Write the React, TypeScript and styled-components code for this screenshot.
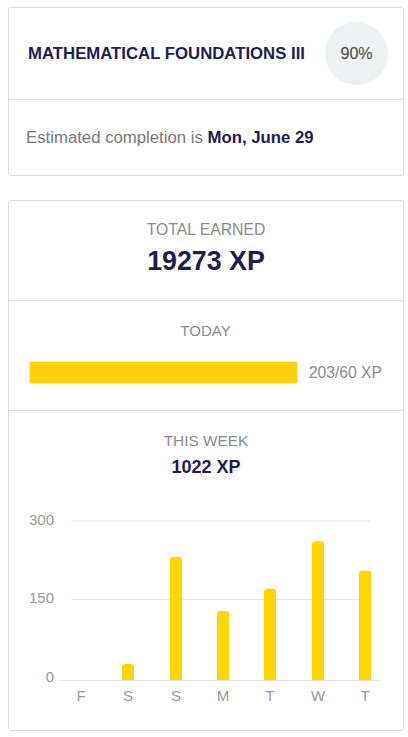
import React from "react";
import styled, { createGlobalStyle } from "styled-components";

const GlobalStyle = createGlobalStyle`
  html, body {
    margin: 0;
    padding: 0;
    background: #ffffff;
  }
  body {
    font-family: "Liberation Sans", Arial, sans-serif;
    padding: 7px 4px 0 8px;
  }
`;

const NAVY = "#221c4f";
const GREY = "#8a8a8a";
const LINE = "#e0e0e0";
const YELLOW = "#ffd600";

const week = [
  { day: "F", xp: 0 },
  { day: "S", xp: 30 },
  { day: "S", xp: 232 },
  { day: "M", xp: 130 },
  { day: "T", xp: 172 },
  { day: "W", xp: 262 },
  { day: "T", xp: 206 },
];

export default function App() {
  return (
    <>
      <GlobalStyle />
      <Styled.Page>
        <Styled.Card>
          <Styled.CourseHeader>
            <Styled.CourseTitle>MATHEMATICAL FOUNDATIONS III</Styled.CourseTitle>
            <Styled.Percent>90%</Styled.Percent>
          </Styled.CourseHeader>
          <Styled.Estimate>
            Estimated completion is <strong>Mon, June 29</strong>
          </Styled.Estimate>
        </Styled.Card>

        <Styled.Card>
          <Styled.Section $pad="20px 20px 23px">
            <Styled.Label $size={15.75}>TOTAL EARNED</Styled.Label>
            <Styled.Value $size={26.8} $gap={7}>
              19273 XP
            </Styled.Value>
          </Styled.Section>
          <Styled.Section $pad="21px 21px 26px 20px">
            <Styled.Label $size={15}>TODAY</Styled.Label>
            <Styled.ProgressRow>
              <Styled.Track>
                <Styled.Fill style={{ width: "100%" }} />
              </Styled.Track>
              <Styled.ProgressText>203/60 XP</Styled.ProgressText>
            </Styled.ProgressRow>
          </Styled.Section>
          <Styled.Section $pad="21px 0 20px">
            <Styled.Label $size={15.4}>THIS WEEK</Styled.Label>
            <Styled.Value $size={18} $gap={6}>
              1022 XP
            </Styled.Value>
            <WeekChart />
          </Styled.Section>
        </Styled.Card>
      </Styled.Page>
    </>
  );
}

const WeekChart = () => {
  const base = 180;
  const scale = 159 / 300;
  const xs = [72, 119, 167, 214, 261, 309, 356];
  return (
    <Styled.Chart width="394" height="210" viewBox="0 0 394 210">
      <line x1="62" x2="361" y1="21" y2="21" stroke="#e6e6e6" />
      <line x1="62" x2="361" y1="99.5" y2="99.5" stroke="#e6e6e6" />
      <line x1="51" x2="371" y1="180.5" y2="180.5" stroke="#e6e6e6" />
      <text x="45" y="25" textAnchor="end">300</text>
      <text x="45" y="103" textAnchor="end">150</text>
      <text x="45" y="182" textAnchor="end">0</text>
      {week.map((d, i) => {
        const h = d.xp * scale;
        const x = xs[i] - 6;
        const top = base - h;
        return (
          <g key={i}>
            {h > 0 && (
              <path
                d={`M${x} ${base} V${top + 3} Q${x} ${top} ${x + 3} ${top} H${x + 9} Q${x + 12} ${top} ${x + 12} ${top + 3} V${base} Z`}
                fill={YELLOW}
              />
            )}
            <text x={xs[i]} y="201" textAnchor="middle">
              {d.day}
            </text>
          </g>
        );
      })}
    </Styled.Chart>
  );
};

const Styled = {
  Page: styled.div`
    display: flex;
    flex-direction: column;
    gap: 24px;
    width: 396px;
  `,
  Card: styled.div`
    border: 1px solid #dedede;
    border-radius: 3px;
    background: #fff;
  `,
  CourseHeader: styled.div`
    display: flex;
    align-items: center;
    justify-content: space-between;
    padding: 14px 15px 14px 19px;
    border-bottom: 1px solid ${LINE};
  `,
  CourseTitle: styled.h1`
    margin: 0;
    font-size: 16.75px;
    font-weight: 700;
    color: ${NAVY};
  `,
  Percent: styled.div`
    width: 63px;
    height: 63px;
    border-radius: 50%;
    background: #eff0f2;
    display: flex;
    align-items: center;
    justify-content: center;
    font-size: 16px;
    color: #444;
  `,
  Estimate: styled.p`
    margin: 0;
    padding: 0 0 0 17px;
    line-height: 75px;
    font-size: 16.75px;
    color: #777;
    strong {
      color: ${NAVY};
    }
  `,
  Section: styled.div<{ $pad: string }>`
    display: flex;
    flex-direction: column;
    align-items: center;
    padding: ${(p) => p.$pad};
    & + & {
      border-top: 1px solid ${LINE};
    }
  `,
  Label: styled.div<{ $size: number }>`
    font-size: ${(p) => p.$size}px;
    line-height: 18px;
    color: ${GREY};
  `,
  Value: styled.div<{ $size: number; $gap: number }>`
    margin-top: ${(p) => p.$gap}px;
    font-size: ${(p) => p.$size}px;
    line-height: ${(p) => Math.round(p.$size) + 4}px;
    font-weight: 700;
    color: ${NAVY};
  `,
  ProgressRow: styled.div`
    align-self: stretch;
    display: flex;
    align-items: center;
    gap: 11px;
    margin-top: 21px;
  `,
  Track: styled.div`
    flex: 1;
    height: 23px;
    border: 1px solid #ececec;
    border-radius: 2px;
    box-sizing: border-box;
    overflow: hidden;
  `,
  Fill: styled.div`
    height: 100%;
    background: #fdd20a;
  `,
  ProgressText: styled.span`
    font-size: 15.7px;
    color: ${GREY};
  `,
  Chart: styled.svg`
    display: block;
    margin-top: 22px;
    font-family: "Liberation Sans", Arial, sans-serif;
    font-size: 15px;
    text {
      fill: #999;
    }
  `,
};
